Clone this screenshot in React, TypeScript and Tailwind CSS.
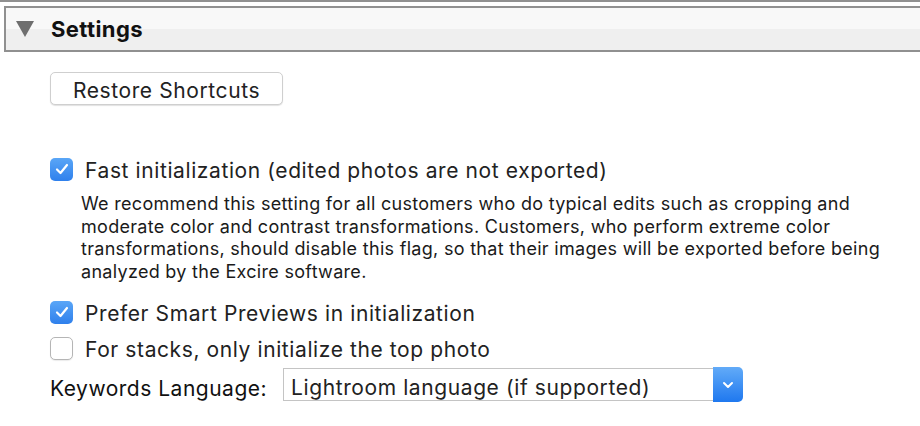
const font = { fontFamily: 'Inter, "Liberation Sans", sans-serif' }

function Check({ checked }: { checked: boolean }) {
  if (!checked) {
    return (
      <div className="w-[23px] h-[23px] shrink-0 rounded-[5px] border border-[#b5b5b5] bg-white shadow-[0_1px_1px_rgba(0,0,0,0.08)]" />
    )
  }
  return (
    <div className="w-[23px] h-[23px] shrink-0 rounded-[5px] bg-[linear-gradient(to_bottom,#5aa6f7,#2f80ec)] flex items-center justify-center">
      <svg width="14" height="12" viewBox="0 0 14 12" fill="none">
        <path d="M2 6.5 L5.5 10 L12 2" stroke="white" strokeWidth="2.2" strokeLinecap="round" strokeLinejoin="round" />
      </svg>
    </div>
  )
}

function CheckRow({ checked, label }: { checked: boolean; label: string }) {
  return (
    <div className="flex items-center h-[24px]">
      <Check checked={checked} />
      <span className="ml-[12px] pt-[3px] text-[21px] tracking-[0.6px] text-[#222]">{label}</span>
    </div>
  )
}

export default function App() {
  return (
    <div className="w-[920px] h-[426px] bg-white overflow-hidden" style={font}>
      <div className="h-[2px] bg-[#909090]" />
      <div className="mt-[4px] ml-[4px] h-[46px] border-2 border-r-0 border-[#909090] bg-[linear-gradient(to_bottom,#f8f8f8_50%,#efefef_50%)] flex items-center">
        <svg className="ml-[10px]" width="18" height="16" viewBox="0 0 18 16">
          <path d="M0 0 H18 L9 16 Z" fill="#6e6e6e" />
        </svg>
        <span className="ml-[17px] text-[22px] tracking-[0.4px] font-bold text-[#111]">Settings</span>
      </div>

      <div className="pl-[50px]">
        <button className="mt-[20px] w-[233px] h-[33px] pt-[4px] rounded-[5px] border border-[#cfcfcf] bg-white shadow-[0_1px_1px_rgba(0,0,0,0.12)] text-[21px] tracking-[0.6px] text-[#222] flex items-center justify-center">
          Restore Shortcuts
        </button>

        <div className="mt-[52px]">
          <CheckRow checked label="Fast initialization (edited photos are not exported)" />
        </div>
        <p className="mt-[12px] ml-[31px] w-[820px] text-[18px] tracking-[0.3px] leading-[22.5px] text-[#1a1a1a]">
          We recommend this setting for all customers who do typical edits such as cropping and
          <br />
          moderate color and contrast transformations. Customers, who perform extreme color
          <br />
          transformations, should disable this flag, so that their images will be exported before being
          <br />
          analyzed by the Excire software.
        </p>

        <div className="mt-[17px]">
          <CheckRow checked label="Prefer Smart Previews in initialization" />
        </div>
        <div className="mt-[12px]">
          <CheckRow checked={false} label="For stacks, only initialize the top photo" />
        </div>

        <div className="mt-[8px] flex h-[33px]">
          <span className="w-[233px] flex items-center pt-[8px] text-[21px] tracking-[0.5px] text-[#111]">Keywords Language:</span>
          <div className="flex w-[460px]">
            <div className="flex-1 border border-[#c4c4c4] border-r-0 bg-white flex items-center pl-[7px] pt-[6px] text-[21px] tracking-[0.6px] text-[#222]">
              Lightroom language (if supported)
            </div>
            <div className="w-[30px] -my-[1px] rounded-r-[5px] bg-[linear-gradient(to_bottom,#62abf8,#1f78ef)] flex items-center justify-center">
              <svg width="12" height="8" viewBox="0 0 12 8" fill="none">
                <path d="M2 2 L6 6 L10 2" stroke="white" strokeWidth="2" strokeLinecap="round" strokeLinejoin="round" />
              </svg>
            </div>
          </div>
        </div>
      </div>
    </div>
  )
}
